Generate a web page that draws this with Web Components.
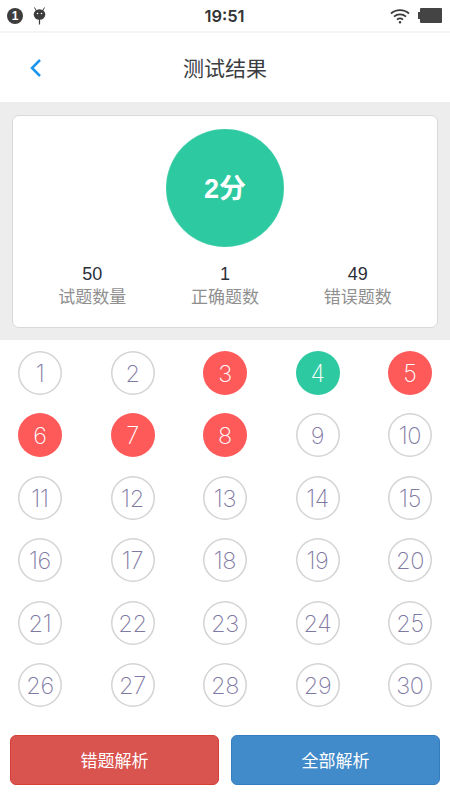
<!DOCTYPE html>
<html lang="zh">
<head>
<meta charset="utf-8">
<title>测试结果</title>
<style>
  html, body { margin: 0; padding: 0; background: #fff; }
  body {
    width: 450px;
    height: 800px;
    overflow: hidden;
    display: flex;
    flex-direction: column;
    font-family: "Liberation Sans", "Noto Sans CJK SC", sans-serif;
  }
</style>
</head>
<body>
<status-bar time="19:51"></status-bar>
<nav-header title="测试结果"></nav-header>
<score-card score="2分">
  <stat-item value="50" label="试题数量"></stat-item>
  <stat-item value="1" label="正确题数"></stat-item>
  <stat-item value="49" label="错误题数"></stat-item>
</score-card>
<answer-grid total="30" wrong="3,5,6,7,8" right="4"></answer-grid>
<action-bar>
  <action-button color="red">错题解析</action-button>
  <action-button color="blue">全部解析</action-button>
</action-bar>

<script>
class StatusBar extends HTMLElement {
  constructor() {
    super();
    this.attachShadow({ mode: 'open' }).innerHTML = `
<style>
  :host { display: flex; flex: none; height: 31px; align-items: center; padding: 0 8px 0 7px; background: #fff; border-bottom: 2px solid #f4f4f4; color: #3a3a3a; }
  .left, .right { flex: 1; display: flex; align-items: center; }
  .left { gap: 10px; }
  .right { justify-content: flex-end; gap: 8px; }
  .time { font-family: Inter, "Liberation Sans", sans-serif; font-size: 16.500px; font-weight: 600; color: #333; }
  svg { display: block; }
  .one { width: 16px; height: 16px; border-radius: 50%; background: #3d3d3d; color: #fff; font-size: 12px; font-weight: 700; text-align: center; line-height: 16px; }
</style>
<div class="left">
  <div class="one">1</div>
  <svg width="13" height="18" viewBox="0 0 13 18"><path d="M1.500 .5l2 3.500M11.500 .5l-2 3.500" stroke="#3d3d3d" stroke-width="1" fill="none"/><ellipse cx="6.500" cy="7.500" rx="5.800" ry="5.200" fill="#3d3d3d"/><rect x="5.900" y="11" width="1.200" height="6.500" fill="#3d3d3d"/><circle cx="4.500" cy="6.500" r=".8" fill="#fff"/><circle cx="8.500" cy="6.500" r=".8" fill="#fff"/></svg>
</div>
<div class="time"></div>
<div class="right">
  <svg width="20" height="16" viewBox="0 0 20 16" fill="none" stroke="#3a3a3a" stroke-width="1.800"><path d="M1 5.500c5-4.600 13-4.600 18 0M4 8.600c3.400-3 8.600-3 12 0M7 11.600c1.700-1.400 4.300-1.400 6 0"/><circle cx="10" cy="14.300" r="1.200" fill="#3a3a3a" stroke="none"/></svg>
  <svg width="24" height="15" viewBox="0 0 24 15"><rect x="2" y="0" width="22" height="15" rx="1" fill="#444"/><rect x="0" y="4" width="2" height="7" fill="#444"/></svg>
</div>`;
    this.shadowRoot.querySelector('.time').textContent = this.getAttribute('time');
  }
}
customElements.define('status-bar', StatusBar);

class NavHeader extends HTMLElement {
  constructor() {
    super();
    this.attachShadow({ mode: 'open' }).innerHTML = `
<style>
  :host { display: flex; flex: none; height: 69px; padding-bottom: 2px; box-sizing: border-box; align-items: center; justify-content: center; position: relative; background: #fff; }
  .back { position: absolute; left: 29px; top: 25px; display: block; }
  h1 { margin: 0; font-size: 21px; font-weight: 400; color: #3a3d42; }
</style>
<svg class="back" width="13" height="20" viewBox="0 0 13 20" fill="none" stroke="#1b95ee" stroke-width="2.500"><path d="M11 2L3 10l8 8"/></svg>
<h1></h1>`;
    this.shadowRoot.querySelector('h1').textContent = this.getAttribute('title');
  }
}
customElements.define('nav-header', NavHeader);

class ScoreCard extends HTMLElement {
  constructor() {
    super();
    this.attachShadow({ mode: 'open' }).innerHTML = `
<style>
  :host { display: block; flex: none; background: #ededed; padding: 13px 12px 12px; }
  .card { height: 213px; box-sizing: border-box; background: #fff; border: 1px solid #d9d9d9; border-radius: 7px; padding: 13px 0 0; display: flex; flex-direction: column; align-items: center; }
  .score { width: 118px; height: 118px; border-radius: 50%; background: #2dc9a0; color: #fff; font-size: 27px; font-weight: 700; padding-bottom: 4px; box-sizing: border-box; display: flex; align-items: center; justify-content: center; box-shadow: inset 0 0 1px #a8e6d4; }
  .stats { align-self: stretch; margin-top: 15px; padding: 0 13px; display: grid; grid-template-columns: repeat(3, 1fr); }
</style>
<div class="card">
  <div class="score"></div>
  <div class="stats"><slot></slot></div>
</div>`;
    this.shadowRoot.querySelector('.score').textContent = this.getAttribute('score');
  }
}
customElements.define('score-card', ScoreCard);

class StatItem extends HTMLElement {
  constructor() {
    super();
    this.attachShadow({ mode: 'open' }).innerHTML = `
<style>
  :host { display: block; text-align: center; }
  .value { font-size: 18px; line-height: 24px; color: #2b2f3a; }
  .label { font-size: 17px; line-height: 24px; color: #8f8f8f; }
</style>
<div class="value"></div>
<div class="label"></div>`;
    this.shadowRoot.querySelector('.value').textContent = this.getAttribute('value');
    this.shadowRoot.querySelector('.label').textContent = this.getAttribute('label');
  }
}
customElements.define('stat-item', StatItem);

class AnswerGrid extends HTMLElement {
  constructor() {
    super();
    this.attachShadow({ mode: 'open' }).innerHTML = `
<style>
  :host { display: block; flex: none; padding: 11px 18px 0; height: 384px; box-sizing: border-box; }
  .grid { display: grid; grid-template-columns: repeat(5, 44px); grid-auto-rows: 44px; justify-content: space-between; row-gap: 18.400px; }
  .num { width: 44px; height: 44px; padding-top: 1px; box-sizing: border-box; border-radius: 50%; box-shadow: inset 0 0 0 1.500px #d4d4d4; color: #7f7aa3; font-size: 23.500px; font-family: Inter, "Liberation Sans", sans-serif; font-weight: 250; letter-spacing: -.3px; display: flex; align-items: center; justify-content: center; }
  .wrong { background: #ff5a5a; box-shadow: none; color: #fff; }
  .right { background: #2dc9a0; box-shadow: none; color: #fff; }
</style>
<div class="grid"></div>`;
    const wrong = this.getAttribute('wrong').split(',');
    const right = this.getAttribute('right').split(',');
    const grid = this.shadowRoot.querySelector('.grid');
    const total = parseInt(this.getAttribute('total'), 10);
    for (let i = 1; i <= total; i += 1) {
      const num = document.createElement('div');
      num.className = 'num';
      if (wrong.includes(String(i))) num.classList.add('wrong');
      if (right.includes(String(i))) num.classList.add('right');
      num.textContent = i;
      grid.appendChild(num);
    }
  }
}
customElements.define('answer-grid', AnswerGrid);

class ActionBar extends HTMLElement {
  constructor() {
    super();
    this.attachShadow({ mode: 'open' }).innerHTML = `
<style>
  :host { display: grid; flex: none; grid-template-columns: 1fr 1fr; gap: 12px; padding: 11px 10px 0; }
</style>
<slot></slot>`;
  }
}
customElements.define('action-bar', ActionBar);

class ActionButton extends HTMLElement {
  constructor() {
    super();
    this.attachShadow({ mode: 'open' }).innerHTML = `
<style>
  :host { display: flex; height: 50px; padding-bottom: 2px; box-sizing: border-box; align-items: center; justify-content: center; border-radius: 6px; color: #fff; font-size: 17px; border: 1px solid; }
  :host([color="red"]) { background: #d9534f; border-color: #d43f3a; }
  :host([color="blue"]) { background: #428bca; border-color: #357ebd; }
</style>
<slot></slot>`;
  }
}
customElements.define('action-button', ActionButton);
</script>
</body>
</html>
